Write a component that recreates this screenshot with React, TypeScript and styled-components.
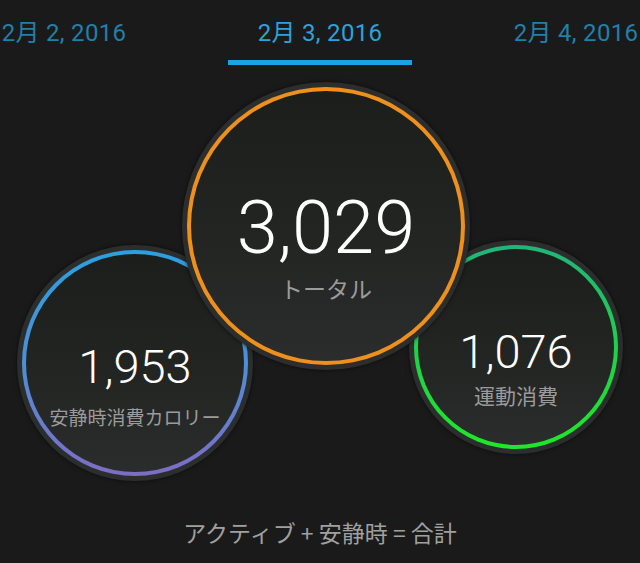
import React from 'react';
import styled, { createGlobalStyle } from 'styled-components';

const GlobalStyle = createGlobalStyle`
  html, body {
    margin: 0;
    padding: 0;
    background: #1a1a1a;
  }
  body {
    font-family: Roboto, "Noto Sans CJK JP", sans-serif;
  }
`;

const Screen = styled.div`
  width: 640px;
  height: 563px;
  background: #1a1a1a;
  display: flex;
  flex-direction: column;
  overflow: hidden;
`;

const Tabs = styled.div`
  display: flex;
  justify-content: space-between;
  align-items: flex-start;
  height: 66px;
`;

const Tab = styled.div<{ $active?: boolean }>`
  width: ${({ $active }) => ($active ? '184px' : '128px')};
  height: 60px;
  box-sizing: content-box;
  display: flex;
  align-items: center;
  justify-content: center;
  border-bottom: 5px solid ${({ $active }) => ($active ? '#1ba3e2' : 'transparent')};
  color: ${({ $active }) => ($active ? '#2ba3dc' : '#227fa8')};
  font-size: 24px;
  letter-spacing: 0.3px;
  font-family: Roboto, "Noto Sans CJK JP", sans-serif;
  white-space: nowrap;
  padding-top: 2px;
  margin-top: -2px;
`;

const Stage = styled.div`
  position: relative;
  flex: 1;
`;

const Rim = styled.div<{ $size: number; $x: number; $y: number; $z: number }>`
  position: absolute;
  left: ${({ $x }) => $x}px;
  top: ${({ $y }) => $y}px;
  z-index: ${({ $z }) => $z};
  width: ${({ $size }) => $size}px;
  height: ${({ $size }) => $size}px;
  box-sizing: border-box;
  padding: 5px;
  border-radius: 50%;
  background: #2c2e2d;
  box-shadow: 0 0 4px rgba(0, 0, 0, 0.6);
`;

const Ring = styled.div<{ $ring: string }>`
  width: 100%;
  height: 100%;
  box-sizing: border-box;
  padding: 4px;
  border-radius: 50%;
  background: ${({ $ring }) => $ring};
`;

const Face = styled.div<{ $shift: number }>`
  width: 100%;
  height: 100%;
  box-sizing: border-box;
  border-radius: 50%;
  background: linear-gradient(180deg, #1c1e1c 0%, #232523 55%, #2b2d2d 100%);
  display: flex;
  flex-direction: column;
  align-items: center;
  justify-content: center;
  padding-top: ${({ $shift }) => $shift}px;
`;

const Value = styled.div<{ $size: number }>`
  color: #ffffff;
  font-family: Roboto, sans-serif;
  font-weight: 300;
  font-size: ${({ $size }) => $size}px;
  line-height: 1;
`;

const Label = styled.div<{ $size: number; $gap: number }>`
  color: #9b9b9b;
  font-family: "Noto Sans CJK JP", sans-serif;
  font-size: ${({ $size }) => $size}px;
  line-height: 1.2;
  margin-top: ${({ $gap }) => $gap}px;
  white-space: nowrap;
`;

const Footer = styled.div`
  height: 62px;
  display: flex;
  justify-content: center;
  align-items: flex-start;
  color: #a0a0a0;
  font-family: "Noto Sans CJK JP", sans-serif;
  font-size: 23px;
  padding-top: 14px;
  box-sizing: border-box;
`;

interface DialProps {
  size: number;
  x: number;
  y: number;
  z: number;
  ring: string;
  value: string;
  valueSize: number;
  label: string;
  labelSize: number;
  gap: number;
  shift: number;
}

const Dial = ({ size, x, y, z, ring, value, valueSize, label, labelSize, gap, shift }: DialProps) => (
  <Rim $size={size} $x={x} $y={y} $z={z}>
    <Ring $ring={ring}>
      <Face $shift={shift}>
        <Value $size={valueSize}>{value}</Value>
        <Label $size={labelSize} $gap={gap}>
          {label}
        </Label>
      </Face>
    </Ring>
  </Rim>
);

const App = () => (
  <Screen>
    <GlobalStyle />
    <Tabs>
      <Tab>2月 2, 2016</Tab>
      <Tab $active>2月 3, 2016</Tab>
      <Tab>2月 4, 2016</Tab>
    </Tabs>
    <Stage>
      <Dial
        size={236}
        x={17}
        y={179}
        z={1}
        ring="linear-gradient(180deg, #2ba0e0 0%, #4d8fd8 50%, #7f6cc4 100%)"
        value="1,953"
        valueSize={47}
        label="安静時消費カロリー"
        labelSize={19}
        gap={16}
        shift={46}
      />
      <Dial
        size={214}
        x={409}
        y={174}
        z={1}
        ring="linear-gradient(180deg, #22b47a 0%, #1fd04a 50%, #1ee828 100%)"
        value="1,076"
        valueSize={47}
        label="運動消費"
        labelSize={21}
        gap={8}
        shift={42}
      />
      <Dial
        size={288}
        x={182}
        y={16}
        z={2}
        ring="#f0901c"
        value="3,029"
        valueSize={74}
        label="トータル"
        labelSize={23}
        gap={10}
        shift={42}
      />
    </Stage>
    <Footer>アクティブ + 安静時 = 合計</Footer>
  </Screen>
);

export default App;
